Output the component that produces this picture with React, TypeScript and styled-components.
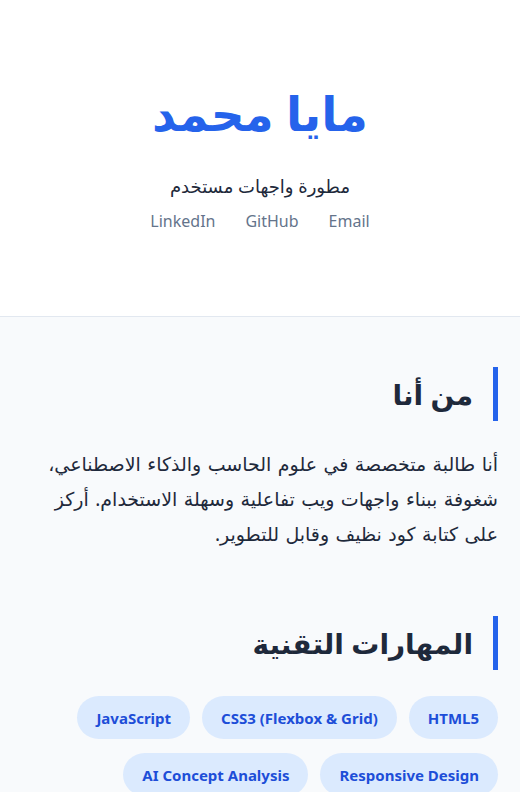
import React from "react";
import styled, { createGlobalStyle } from "styled-components";

const Global = createGlobalStyle`
  html, body { margin: 0; padding: 0; background: #f8fafc; }
  body { font-family: "Noto Sans", "DejaVu Sans", sans-serif; direction: rtl; }
  * { box-sizing: border-box; }
`;

const Page = styled.div`
  min-height: 792px;
  background: #f8fafc;
`;

const Header = styled.header`
  background: #ffffff;
  border-bottom: 1px solid #e2e8f0;
  height: 317px;
  display: flex;
  flex-direction: column;
  align-items: center;
  padding-top: 85px;
`;

const Name = styled.h1`
  margin: 0;
  font-size: 47px;
  font-weight: 700;
  color: #2563eb;
  line-height: 1.2;
`;

const Role = styled.p`
  margin: 32px 0 0;
  font-size: 18px;
  color: #1e293b;
  line-height: 1.5;
`;

const Links = styled.nav`
  display: flex;
  gap: 30px;
  margin-top: 9px;
`;

const LinkItem = styled.a`
  font-size: 16px;
  color: #64748b;
  text-decoration: none;
  line-height: 1.5;
`;

const Main = styled.main`
  padding: 50px 22px 0;
`;

const Section = styled.section`
  margin-bottom: 64px;
`;

const Heading = styled.h2`
  margin: 0 0 26px;
  border-right: 5px solid #2563eb;
  padding-right: 20px;
  font-size: 28px;
  font-weight: 700;
  color: #1e293b;
  line-height: 54px;
`;

const Para = styled.p`
  margin: 0;
  font-size: 19px;
  word-spacing: 1.5px;
  line-height: 35px;
  color: #1e293b;
`;

const Tags = styled.div`
  display: flex;
  flex-wrap: wrap;
  gap: 14px 12px;
`;

const Tag = styled.span`
  direction: ltr;
  background: #dbeafe;
  color: #1d4ed8;
  font-weight: 700;
  font-size: 15px;
  height: 43px;
  padding: 0 19px;
  border-radius: 22px;
  display: inline-flex;
  align-items: center;
`;

const skills = [
  "HTML5",
  "CSS3 (Flexbox & Grid)",
  "JavaScript",
  "Responsive Design",
  "AI Concept Analysis",
];

export default function App() {
  return (
    <Page>
      <Global />
      <Header>
        <Name>مايا محمد</Name>
        <Role>مطورة واجهات مستخدم</Role>
        <Links>
          <LinkItem href="#">Email</LinkItem>
          <LinkItem href="#">GitHub</LinkItem>
          <LinkItem href="#">LinkedIn</LinkItem>
        </Links>
      </Header>
      <Main>
        <Section>
          <Heading>من أنا</Heading>
          <Para>
            أنا طالبة متخصصة في علوم الحاسب والذكاء الاصطناعي، شغوفة ببناء واجهات ويب تفاعلية وسهلة الاستخدام. أركز على كتابة كود نظيف وقابل للتطوير.
          </Para>
        </Section>
        <Section>
          <Heading>المهارات التقنية</Heading>
          <Tags>
            {skills.map((s) => (
              <Tag key={s}>{s}</Tag>
            ))}
          </Tags>
        </Section>
      </Main>
    </Page>
  );
}
